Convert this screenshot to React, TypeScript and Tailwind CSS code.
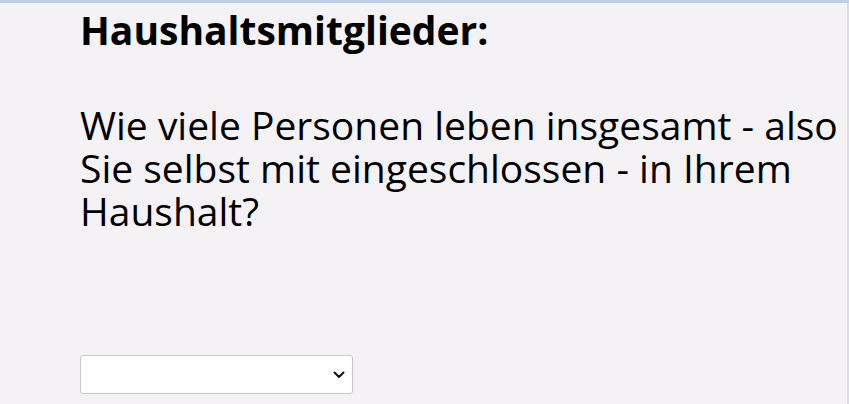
export default function App() {
  return (
    <div className="h-[404px] w-[849px] overflow-hidden bg-[#f5f2f6] font-['Open_Sans',sans-serif] text-black">
      <div className="h-[3px] bg-[#bfd1e9]" />
      <div className="flex h-[401px] border-r-2 border-[#dcdce3]">
        <div className="flex flex-col pl-[80px]">
          <h1 className="mt-[7px] text-[39px] font-bold leading-[40px]">Haushaltsmitglieder:</h1>
          <p className="mt-[52.5px] w-[767px] text-[39px] leading-[43.3px]">
            Wie viele Personen leben insgesamt - also Sie selbst mit eingeschlossen - in Ihrem Haushalt?
          </p>
          <div className="relative mt-[122.5px] h-[39px] w-[273px]">
            <select
              aria-label="Anzahl Personen"
              className="h-full w-full appearance-none rounded-[3px] border border-[#c8c8c8] bg-white"
            />
            <svg
              className="pointer-events-none absolute left-[253px] top-[16px]"
              width="12"
              height="8"
              viewBox="0 0 12 8"
              fill="none"
              aria-hidden="true"
            >
              <path d="M1.5 1.5 L6 6 L10.5 1.5" stroke="#111" strokeWidth="2" strokeLinecap="round" strokeLinejoin="round" />
            </svg>
          </div>
        </div>
      </div>
    </div>
  );
}
